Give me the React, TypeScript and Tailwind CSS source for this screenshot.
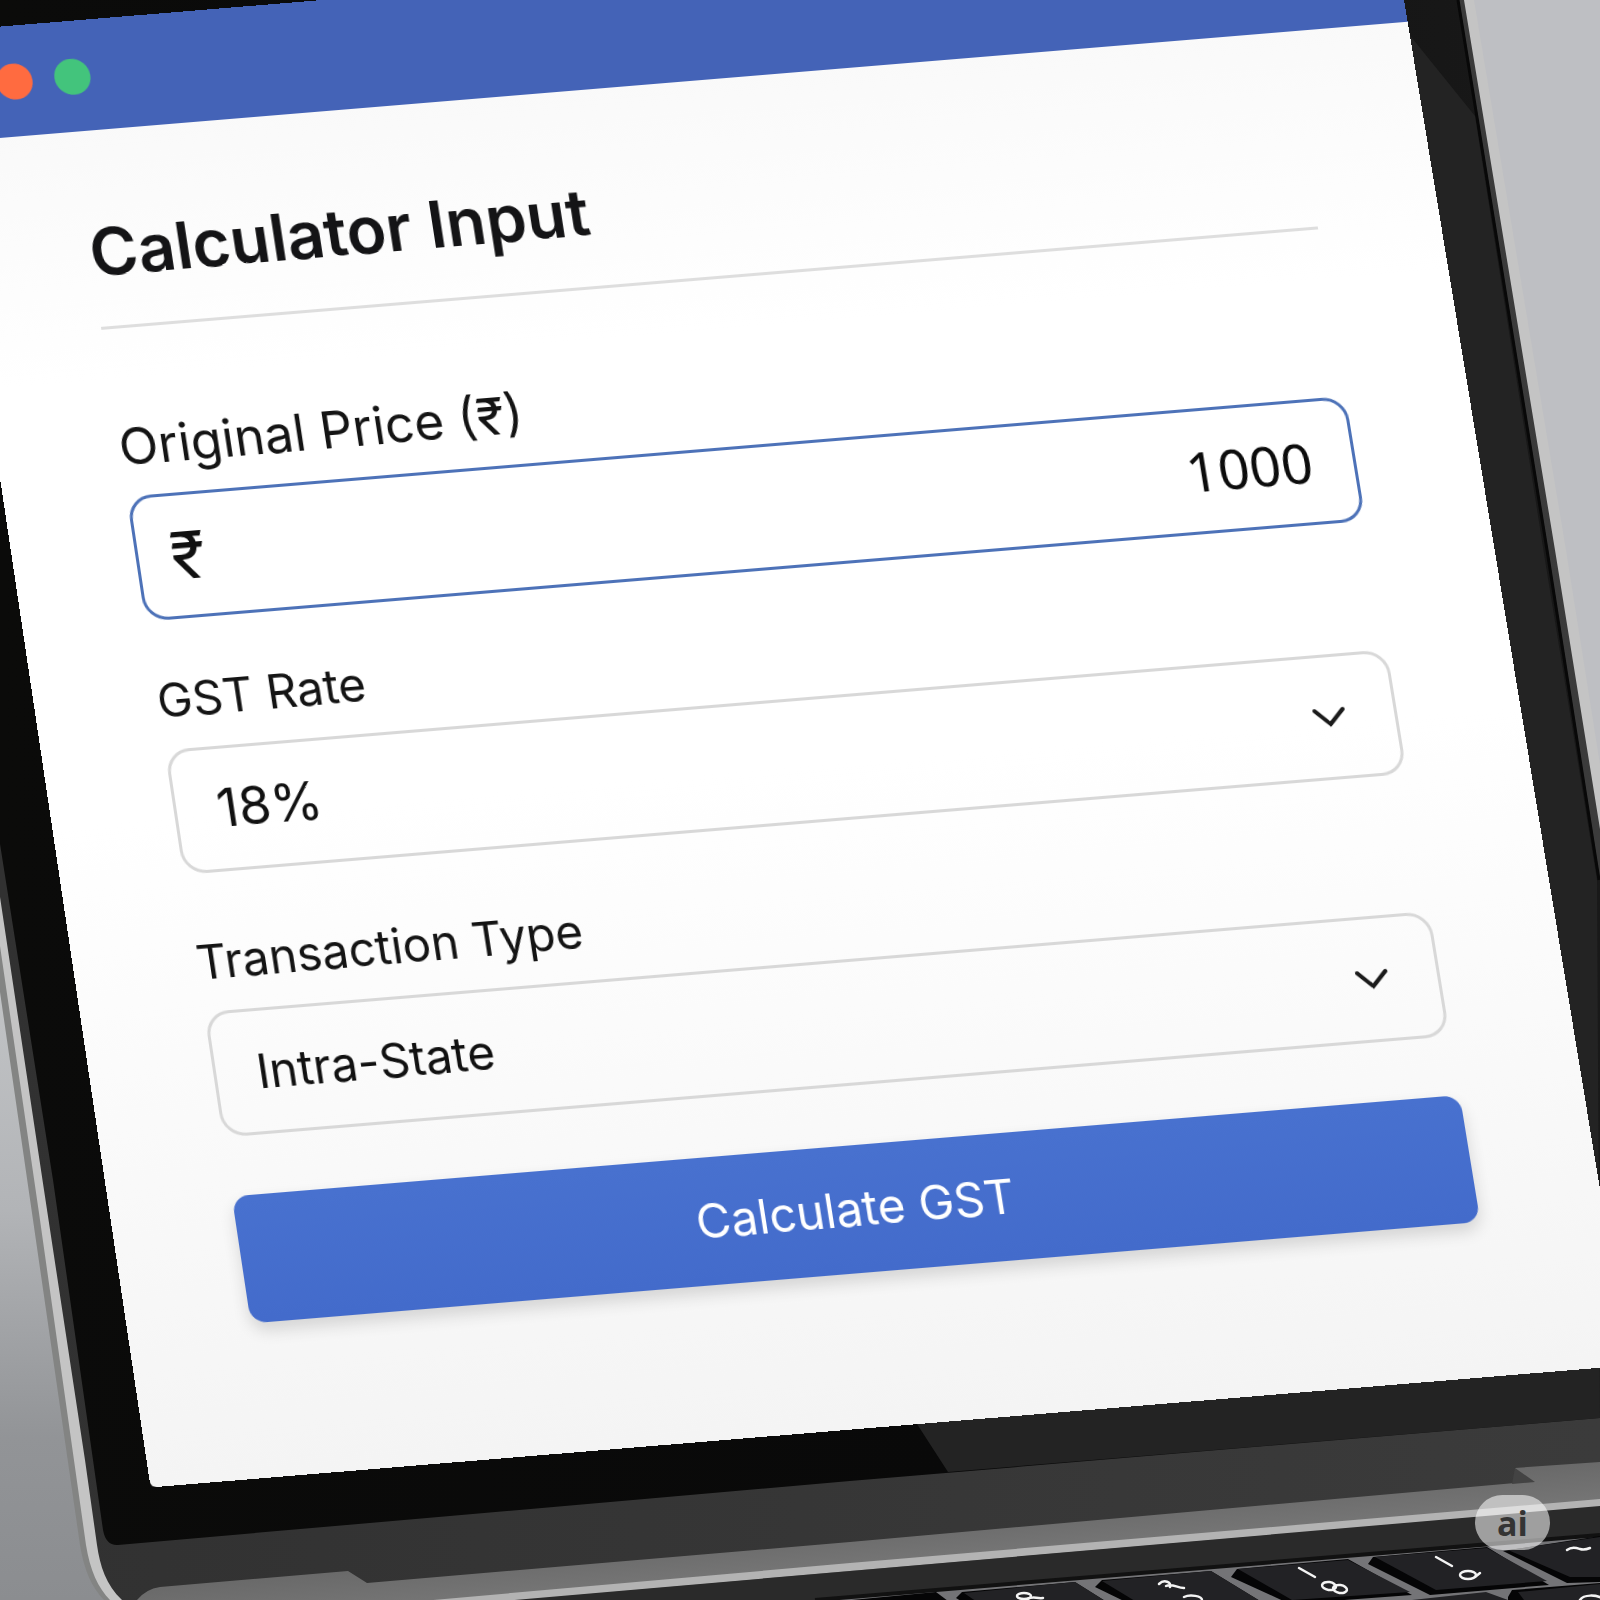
import React, { useState } from "react";
import type { ReactNode } from "react";

function Laptop() {
  return (
    <svg
      className="absolute inset-0 h-full w-full"
      viewBox="0 0 1600 1600"
      preserveAspectRatio="none"
      aria-hidden="true"
    >
      <defs>
        <linearGradient id="wallLeft" x1="0" y1="950" x2="0" y2="1600" gradientUnits="userSpaceOnUse">
          <stop offset="0" stopColor="#c4c6c8" />
          <stop offset="0.4" stopColor="#b2b4b7" />
          <stop offset="0.75" stopColor="#929497" />
          <stop offset="1" stopColor="#8b8d90" />
        </linearGradient>
        <linearGradient id="bezel" x1="0" y1="0" x2="1600" y2="0" gradientUnits="userSpaceOnUse">
          <stop offset="0" stopColor="#0b0b0a" />
          <stop offset="0.6" stopColor="#090909" />
          <stop offset="0.85" stopColor="#161616" />
          <stop offset="1" stopColor="#191919" />
        </linearGradient>
        <linearGradient id="chin" x1="0" y1="0" x2="1600" y2="0" gradientUnits="userSpaceOnUse">
          <stop offset="0" stopColor="#313131" />
          <stop offset="1" stopColor="#3b3b3b" />
        </linearGradient>
        <linearGradient id="hinge" x1="0" y1="0" x2="8" y2="92" gradientUnits="userSpaceOnUse" gradientTransform="translate(800 1500)">
          <stop offset="0" stopColor="#606060" />
          <stop offset="1" stopColor="#7c7c7c" />
        </linearGradient>
      </defs>

      <rect width="1600" height="1600" fill="#bebfc3" />
      <path d="M0 900H300V1600H0z" fill="url(#wallLeft)" />

      {/* lid rim */}
      <path d="M0 0H1000V1600H104C92 1588 84 1570 80 1545L32 1213L0 992z" fill="#838483" />
      <path d="M0 0H1474L1566 550L1612 840V1600H110C98 1588 90 1570 86 1545L39 1213L0 946z" fill="#c4c4c4" />
      <path d="M0 0H1464L1555 550L1605 860V1600H122C106 1585 100 1566 97 1545L85 1460L44 1190L0 897z" fill="url(#chin)" />
      <path d="M0 0H1459L1548 550L1600 880V1418L850 1481L450 1516L118 1545Q106 1546 103 1530L53 1180L0 844z" fill="url(#bezel)" />
      <path d="M1458 0L1547 550L1599 880" fill="none" stroke="#080808" strokeWidth="3" />

      {/* glass reflection */}
      <path d="M1404 28L1475 116L1545 560L1597 880L1600 1418L948 1472L917 1424L1560 1360L1500 900z" fill="#232323" />

      {/* hinge and deck */}
      <path d="M137 1600Q146 1589 160 1587L348 1571L367 1583L850 1542L1515 1483V1468L1600 1462V1600z" fill="url(#hinge)" />
      <path d="M1515 1468L1535 1482L1512 1484z" fill="#434343" />
      <path d="M377 1605L850 1563L1600 1499V1507L850 1571L377 1613z" fill="#b3b3b3" />
      <path d="M480 1603L850 1571L1600 1506V1600H480z" fill="#2a2a2a" />
      <path d="M815 1600L1600 1534V1600z" fill="#747477" />
      <path d="M815 1600L1600 1535" stroke="#111111" strokeWidth="4" />

      {/* key caps */}
      <g fill="#050506">
        <path d="M956 1598L962 1592L1075 1582L1110 1604H966z" />
        <path d="M1095 1587L1102 1580L1211 1571L1265 1604H1130z" />
        <path d="M1231 1577L1237 1569L1348 1559L1412 1595L1290 1604z" />
        <path d="M1368 1564L1373 1557L1487 1547L1549 1585L1430 1595z" />
        <path d="M1503 1551L1600 1536V1582L1567 1583z" />
        <path d="M1508 1597L1512 1590L1600 1583V1600H1508z" />
        <path d="M820 1603L936 1592L952 1604z" />
      </g>
      <g fill="#222225">
        <path d="M964 1593L1075 1582L1110 1604H980z" />
        <path d="M1102 1581L1211 1571L1265 1604H1140z" />
        <path d="M1238 1569L1348 1560L1410 1592L1292 1600z" />
        <path d="M1375 1557L1487 1548L1547 1581L1436 1590z" />
        <path d="M1508 1550L1600 1537V1577L1570 1577z" />
        <path d="M1518 1592L1600 1584V1600H1524z" />
        <path d="M1412 1600L1486 1592L1508 1600z" />
      </g>
      <g stroke="#f4f4f4" strokeWidth="2.5" fill="none" strokeLinecap="round">
        <path d="M1299 1568L1315 1577" />
        <path d="M1436 1557L1452 1566" />
        <path d="M1159 1584C1164 1579 1172 1582 1170 1587M1166 1586C1172 1583 1177 1588 1184 1588" />
        <path d="M1567 1550C1572 1546 1577 1548 1580 1549S1585 1550 1590 1548" />
        <ellipse cx="1024" cy="1596" rx="7" ry="3" />
        <path d="M1026 1600C1032 1595 1036 1599 1043 1598" />
        <path d="M1184 1597C1190 1594 1202 1596 1202 1600" />
        <path d="M1580 1600C1584 1594 1596 1595 1602 1598" />
        <ellipse cx="1329" cy="1586" rx="7" ry="4" transform="rotate(8 1329 1586)" />
        <ellipse cx="1340" cy="1589" rx="7" ry="4" transform="rotate(8 1340 1589)" />
        <ellipse cx="1468" cy="1575" rx="8" ry="4" />
        <path d="M1475 1577L1480 1573" />
      </g>
    </svg>
  );
}

function Field({ id, label, className, children }: { id: string; label: string; className: string; children: ReactNode }) {
  return (
    <div className={className}>
      <label htmlFor={id} className="mb-[17px] block w-fit leading-16 text-[#141414]">
        {label}
      </label>
      {children}
    </div>
  );
}

function SelectBox({ id, className, options }: { id: string; className: string; options: string[] }) {
  return (
    <div className="relative">
      <select
        id={id}
        defaultValue={options[0]}
        className={`h-[124px] w-full appearance-none rounded-3xl border-[3px] border-[#d8d8d8] bg-transparent px-10 text-[#111111] outline-none ${className}`}
      >
        {options.map((option) => (
          <option key={option}>{option}</option>
        ))}
      </select>
      <svg
        className="pointer-events-none absolute top-1/2 right-[51px] h-5 w-8 -translate-y-1/2"
        viewBox="0 0 32 20"
        fill="none"
        stroke="#1b1b1b"
        strokeWidth="4"
        strokeLinecap="round"
        aria-hidden="true"
      >
        <path d="M2 3L16 17L30 3" />
      </svg>
    </div>
  );
}

export default function App() {
  const [price, setPrice] = useState("1000");

  return (
    <div className="relative h-screen w-full overflow-hidden bg-[#c0c1c5] font-['Inter','Noto_Sans',sans-serif]">
      <Laptop />

      <main className="relative -mt-7 -ml-[69px] w-[91.3%] origin-top overflow-hidden rounded-md bg-[linear-gradient(to_bottom,#f7f7f7,#ffffff_25%,#ffffff_55%,#f4f4f4)] [transform:rotate(-4.72deg)_skewX(4.2deg)_perspective(5000px)_rotateX(3deg)]">
        <header className="flex h-[111px] items-center gap-[22px] bg-[#4463b7] pl-[55px]">
          <span className="size-9 rounded-full bg-[#ff6b40]" />
          <span className="size-9 rounded-full bg-[#43c47c]" />
        </header>

        <form className="px-[122px] pt-[82px] pb-[151px]" onSubmit={(event) => event.preventDefault()}>
          <h1 className="border-b-3 border-[#dedede] pb-[34px] text-[65px] leading-20 font-semibold text-[#141416]">
            Calculator Input
          </h1>

          <Field id="price" label="Original Price (₹)" className="mt-[86px] text-[51px]">
            <div className="flex h-[125px] items-center rounded-3xl border-[3px] border-[#4d72b8] pr-10 pl-8">
              <span className="text-[64px] leading-none text-[#111111]">₹</span>
              <input
                id="price"
                inputMode="numeric"
                value={price}
                onChange={(event) => setPrice(event.target.value)}
                className="min-w-0 flex-1 bg-transparent text-right font-['Noto_Sans',sans-serif] text-[55px] text-[#0c0c0c] outline-none"
              />
            </div>
          </Field>

          <Field id="rate" label="GST Rate" className="mt-[47px] text-[47px]">
            <SelectBox id="rate" className="text-[52px]" options={["18%", "5%", "12%", "28%"]} />
          </Field>

          <Field id="type" label="Transaction Type" className="mt-[55px] text-[47px]">
            <SelectBox id="type" className="text-[47px]" options={["Intra-State", "Inter-State"]} />
          </Field>

          <button
            type="submit"
            className="mt-[58px] h-[125px] w-full rounded-2xl bg-linear-to-t from-[#436bcb] to-[#4871cf] text-[47px] text-white shadow-[0_8px_16px_rgba(0,0,0,0.14)]"
          >
            Calculate GST
          </button>
        </form>
      </main>

      <div className="absolute right-[50px] bottom-[50px] flex h-[55px] w-[75px] items-center justify-center rounded-full bg-white/55 font-['Open_Sans',sans-serif] text-[34px] leading-none font-bold text-[#343434]">
        ai
      </div>
    </div>
  );
}
